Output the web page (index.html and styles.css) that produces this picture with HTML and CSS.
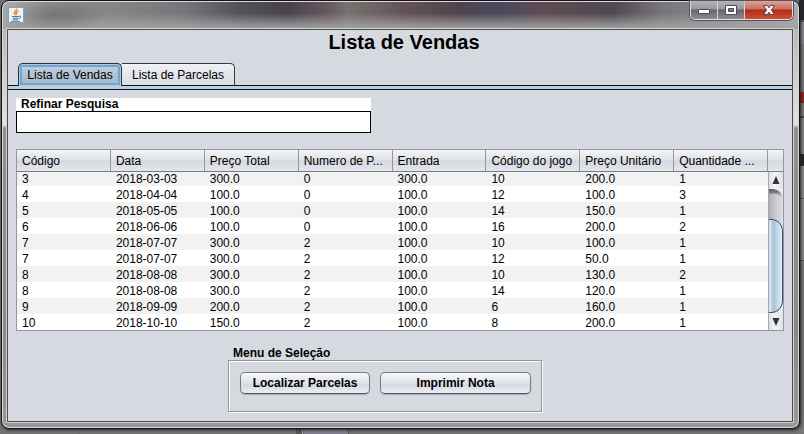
FILE: index.html
```html
<!DOCTYPE html>
<html lang="pt-BR">
<head>
<meta charset="utf-8">
<meta name="viewport" content="width=device-width, initial-scale=1">
<title>Lista de Vendas</title>
<link rel="stylesheet" href="styles.css">
</head>
<body>
<div class="window">
  <header class="titlebar">
    <svg class="java" viewBox="0 0 16 16" aria-hidden="true">
      <rect x=".5" y=".5" width="15" height="15" fill="#eef3f7" stroke="#7fa6c0"/>
      <path d="M8.600 1.500c1 2-3.200 3-2.200 5 .3.700 1 1 1.300 1.700M10.300 4c-2 1-3 2-1.500 3.700" fill="none" stroke="#ee8420" stroke-width="1.400"/>
      <path d="M4 9.500h7M4.500 11.200h6M5 12.700h5M11 9.200c2.500-.6 2.500 1.800 0 2.300M3 14.300h9" fill="none" stroke="#4d7e9f" stroke-width="1"/>
    </svg>
    <div class="controls">
      <button type="button" aria-label="Minimizar"><svg width="14" height="14" viewBox="0 0 14 14"><rect x="1.500" y="6.500" width="11" height="4" rx=".5" fill="#fff" stroke="#4b4b5e"/></svg></button>
      <button type="button" aria-label="Maximizar"><svg width="14" height="14" viewBox="0 0 14 14"><path d="M1.500 2.500h11v9h-11zM4.500 5.500v3h5v-3z" fill="#fff" fill-rule="evenodd" stroke="#4b4b5e"/></svg></button>
      <button type="button" class="close" aria-label="Fechar"><svg width="14" height="14" viewBox="0 0 14 14"><path d="M1.500 2.500h3.700L7 4.800l1.800-2.300h3.700L9.300 7l3.200 4.500H8.800L7 9.200l-1.800 2.300H1.500L4.700 7z" fill="#fff" stroke="#5c4250"/></svg></button>
    </div>
  </header>
  <main class="client">
    <h1>Lista de Vendas</h1>
    <div class="tabs" role="tablist">
      <button type="button" class="tab selected" role="tab" aria-selected="true">Lista de Vendas</button>
      <button type="button" class="tab" role="tab" aria-selected="false">Lista de Parcelas</button>
    </div>
    <section class="panel">
      <div class="search">
        <label for="q">Refinar Pesquisa</label>
        <input id="q" type="text">
      </div>
      <div class="grid">
        <table>
          <thead><tr><th>Código</th><th>Data</th><th>Preço Total</th><th>Numero de P...</th><th>Entrada</th><th>Código do jogo</th><th>Preço Unitário</th><th>Quantidade ...</th></tr></thead>
          <tbody>
            <tr class="clipped"><td>3</td><td>2018-03-03</td><td>300.0</td><td>0</td><td>300.0</td><td>10</td><td>200.0</td><td>1</td></tr>
            <tr><td>4</td><td>2018-04-04</td><td>100.0</td><td>0</td><td>100.0</td><td>12</td><td>100.0</td><td>3</td></tr>
            <tr><td>5</td><td>2018-05-05</td><td>100.0</td><td>0</td><td>100.0</td><td>14</td><td>150.0</td><td>1</td></tr>
            <tr><td>6</td><td>2018-06-06</td><td>100.0</td><td>0</td><td>100.0</td><td>16</td><td>200.0</td><td>2</td></tr>
            <tr><td>7</td><td>2018-07-07</td><td>300.0</td><td>2</td><td>100.0</td><td>10</td><td>100.0</td><td>1</td></tr>
            <tr><td>7</td><td>2018-07-07</td><td>300.0</td><td>2</td><td>100.0</td><td>12</td><td>50.0</td><td>1</td></tr>
            <tr><td>8</td><td>2018-08-08</td><td>300.0</td><td>2</td><td>100.0</td><td>10</td><td>130.0</td><td>2</td></tr>
            <tr><td>8</td><td>2018-08-08</td><td>300.0</td><td>2</td><td>100.0</td><td>14</td><td>120.0</td><td>1</td></tr>
            <tr><td>9</td><td>2018-09-09</td><td>200.0</td><td>2</td><td>100.0</td><td>6</td><td>160.0</td><td>1</td></tr>
            <tr><td>10</td><td>2018-10-10</td><td>150.0</td><td>2</td><td>100.0</td><td>8</td><td>200.0</td><td>1</td></tr>
          </tbody>
        </table>
        <div class="side">
          <div class="corner"></div>
          <div class="scrollbar">
            <button type="button" aria-label="Rolar para cima"><svg width="8" height="8" viewBox="0 0 8 8"><path d="M4 0l3.500 8h-7z" fill="#333"/></svg></button>
            <svg class="track" viewBox="0 0 15 126" preserveAspectRatio="none" aria-hidden="true">
              <defs>
                <linearGradient id="t"><stop offset="0" stop-color="#aeb0b6"/><stop offset=".5" stop-color="#cbcdd3"/><stop offset="1" stop-color="#d9dbe1"/></linearGradient>
                <linearGradient id="s" x2="0" y2="1"><stop offset="0" stop-color="#55575c"/><stop offset="1" stop-color="#55575c" stop-opacity="0"/></linearGradient>
                <linearGradient id="b"><stop offset="0" stop-color="#d3e1ee"/><stop offset=".2" stop-color="#d3e1ee"/><stop offset=".35" stop-color="#a5bdd4"/><stop offset=".6" stop-color="#c0d5e7"/><stop offset="1" stop-color="#e0f6ff"/></linearGradient>
              </defs>
              <rect width="15" height="126" fill="#ebecef"/>
              <path d="M0 1h2C10 1 14 5 14.500 11V115C14 121 10 125 2 125H0z" fill="url(#t)"/>
              <path d="M0 1h2C10 1 14 5 14.500 10C11 6 7 5 0 6z" fill="url(#s)"/>
              <path d="M-1 31.500H2C10 31.500 14.500 37 14.500 44V112C14.500 119 10 124.500 2 124.500H-1z" fill="url(#b)" stroke="#2b4560"/>
            </svg>
            <button type="button" aria-label="Rolar para baixo"><svg width="8" height="8" viewBox="0 0 8 8"><path d="M4 8L.5 0h7z" fill="#333"/></svg></button>
          </div>
        </div>
      </div>
      <fieldset>
        <legend>Menu de Seleção</legend>
        <div class="actions">
          <button type="button">Localizar Parcelas</button>
          <button type="button">Imprimir Nota</button>
        </div>
      </fieldset>
    </section>
  </main>
</div>
</body>
</html>
```
FILE: styles.css
```css
* { box-sizing: border-box; }

body {
  margin: 0;
  min-height: 100vh;
  display: flex;
  background:
    linear-gradient(90deg, #0000 78px, #646464 78px 79px, #0000 79px 296px, #555 296px 302px, #aaa 302px 303px, #666 303px 304px, #7c7c8c 304px 348px, #555 348px 349px, #0000 349px) left bottom / 100% 6px no-repeat,
    linear-gradient(#26262f 0 20px, #555 20px 22px, #85858f 22px 44px, #777 44px 92px, #8a2020 92px 103px, #777 103px 116px, #444 116px 118px, #808080 118px 154px, #222 154px 166px, #888 166px 198px, #555 198px 199px, #888 199px 260px, #555 260px 261px, #777 261px) right top / 5px 100% no-repeat,
    #727272;
  font: 12px/14px "Liberation Sans", Arial, sans-serif;
  color: #000;
}

button, input { font: inherit; color: inherit; padding: 0; margin: 0; }

/* Window frame */
.window {
  flex: 1;
  min-width: 0;
  display: flex;
  flex-direction: column;
  margin: 0 4px 5px 1px;
  padding: 0 6px 6px 5px;
  border: 1px solid #15131a;
  border-radius: 8px;
  background:
    radial-gradient(ellipse 55px 18px at 52px 14px, #3335, #0000) no-repeat,
    linear-gradient(#0000 12px, #a3a3a3 28px, #0000 28px) no-repeat,
    linear-gradient(90deg, #aaa 0, #8e8e8e 70px, #77777b 180px, #55525c 235px, #47424c 285px, #67585f 325px, #77716f 346px, #655459 400px, #51434c 455px, #474a5c 495px, #604c54 540px, #504850 610px, #77757a 660px, #8c8a8e 720px, #aaa 790px) left top / 100% 28px no-repeat,
    linear-gradient(#aaa 0, #d5d5d5 90px, #e2e2e2 124px, #92908e 127px, #8b8886 330px, #989898);
  box-shadow: inset 0 0 0 1px #dadada, 1px 1px 3px #222;
}

.titlebar {
  display: flex;
  justify-content: space-between;
  align-items: flex-start;
  height: 28px;
}
.java { width: 16px; height: 16px; margin: 6px 0 0 1px; }

.controls {
  display: flex;
  border: 1px solid #e0dfe2;
  border-top: 0;
  border-radius: 0 0 5px 5px;
  overflow: hidden;
  box-shadow: 0 0 0 1px #55535a;
}
.controls button {
  display: flex;
  align-items: center;
  justify-content: center;
  width: 27px;
  height: 18px;
  border: 0;
  border-right: 1px solid #d4d2d6;
  background: linear-gradient(#b5b3b7 0, #99979c 8px, #66646a 9px, #8e8c91);
}
.controls .close {
  width: 47px;
  border-right: 0;
  background: linear-gradient(#dfa397 0, #c86f5f 8px, #ae2c16 9px, #d0502f);
}

/* Client area */
.client {
  flex: 1;
  border: 1px solid #4c4d4f;
  background: #d6d9e0;
  box-shadow: 0 0 0 1px #d0d2d2;
}
h1 {
  margin: 0;
  padding: 0 0 9px 8px;
  font-size: 20px;
  line-height: 24px;
  text-align: center;
}
.tabs {
  display: flex;
  padding-left: 10px;
  height: 27px;
  border-bottom: 1px solid #10131c;
  background: linear-gradient(#0000 22px, #10131c 22px 23px, #b8cfe0 23px);
}
.tab {
  min-width: 113px;
  height: 23px;
  padding: 0 8px;
  border: 1px solid #35383f;
  border-bottom-color: #10131c;
  border-left: 0;
  border-radius: 0 5px 0 0;
  background: linear-gradient(#f0f1f4, #d9dce2);
}
.tab.selected {
  min-width: 104px;
  padding: 0 7px;
  border: 1px solid #1f3549;
  border-bottom: 0;
  border-radius: 5px 5px 0 0;
  background: linear-gradient(#c2d0de, #a1b7cb);
  box-shadow: inset 0 0 0 1px #b0c8de, inset 0 0 0 3px #73a4d1;
}

.panel { padding: 8px; }

.search {
  display: flex;
  flex-direction: column;
  width: 355px;
  max-width: 100%;
  background: #fff;
}
.search label { padding-left: 5px; line-height: 13px; font-weight: bold; }
.search input { height: 22px; padding: 0 4px; border: 1px solid #000; border-radius: 0; background: #fff; outline: 0; }

/* Sales table */
.grid {
  display: grid;
  grid-template-columns: minmax(0, 1fr) 15px;
  margin-top: 16px;
  border: 1px solid #9297a1;
  background: #fff;
}
table { width: 100%; table-layout: fixed; border-collapse: separate; border-spacing: 0; }
th, .corner {
  height: 22px;
  border-bottom: 1px solid #777d88;
  background: linear-gradient(#f4f5f7, #dfe1e6 10px, #d4d7dd 11px, #e3e6ed);
}
th {
  padding: 0 0 0 5px;
  border-right: 1px solid #9297a1;
  font-weight: normal;
  text-align: left;
  white-space: nowrap;
  overflow: hidden;
}
td { padding: 3px 0 1px 5px; line-height: 12px; }
.clipped td { padding-top: 1px; }
tbody tr:nth-child(odd) { background: #f2f2f2; }

.side { display: flex; flex-direction: column; }
.scrollbar { flex: 1; display: flex; flex-direction: column; border-left: 1px solid #a5a8af; }
.scrollbar button {
  display: flex;
  align-items: center;
  justify-content: center;
  height: 16px;
  border: 0;
  background: linear-gradient(90deg, #dcdee2, #f4f4f6 40%, #e2e3e7);
}
.track { flex: 1; min-height: 0; height: 126px; width: 100%; }

/* Actions */
fieldset {
  width: 314px;
  max-width: 100%;
  margin: 15px 0 0 212px;
  padding: 0;
  border: 0;
}
legend { padding: 0 0 0 5px; font-weight: bold; }
.actions {
  display: flex;
  gap: 10px;
  padding: 11px 10px 17px 11px;
  border: 1px solid #92959d;
  box-shadow: inset 1px 1px #fff, 1px 1px #fff;
}
.actions button {
  flex: 151;
  height: 22px;
  border: 1px solid #777b83;
  border-bottom-color: #4f535b;
  border-radius: 5px;
  background: linear-gradient(#f8f9fa, #dfe2e7 10px, #d5d8df 12px, #eaeef5);
  box-shadow: 0 1px 1px #a9adb5;
  font-weight: bold;
}
.actions button:first-child { flex: 130; }
```
